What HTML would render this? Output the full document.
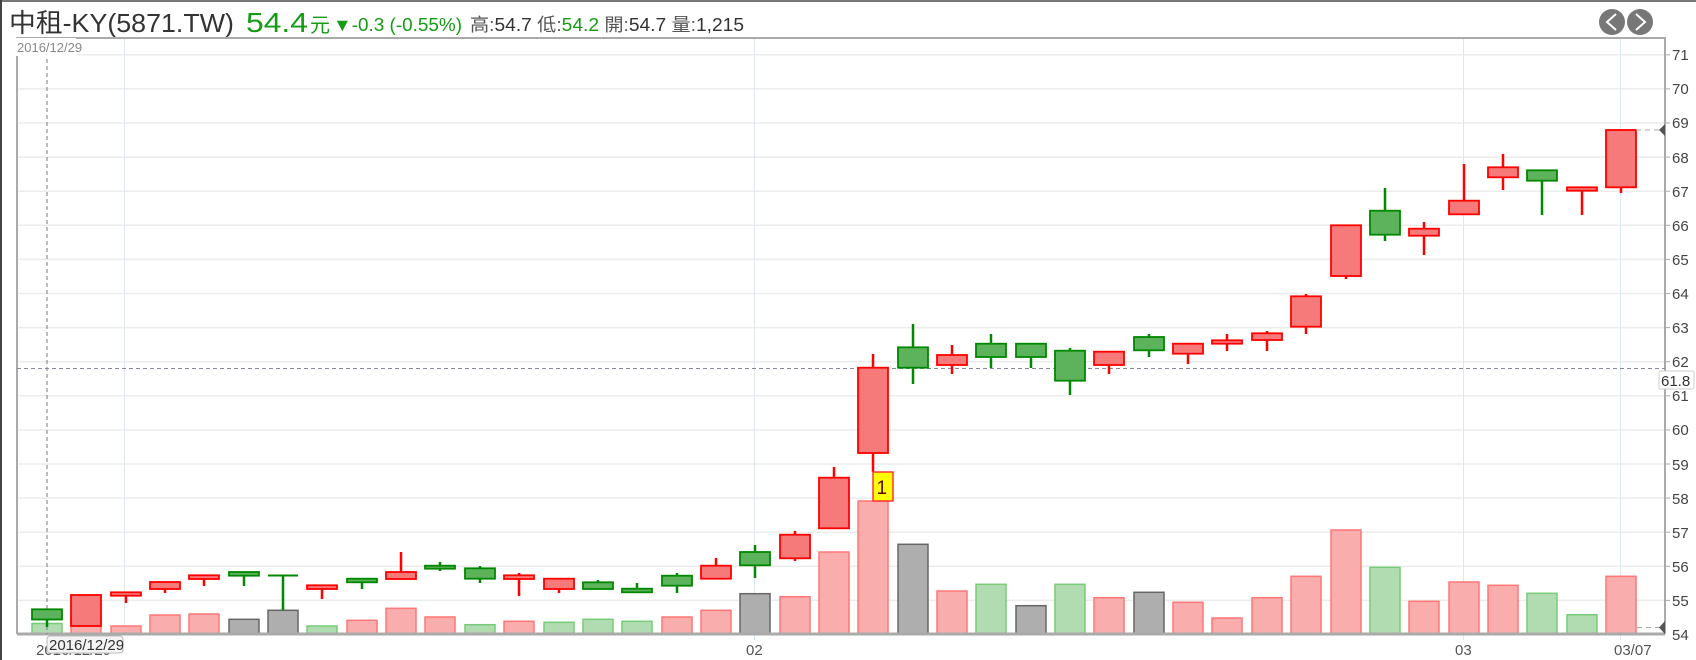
<!DOCTYPE html>
<html><head><meta charset="utf-8"><style>
html,body{margin:0;padding:0;background:#fff;width:1696px;height:660px;overflow:hidden}
svg{display:block}
text{font-family:"Liberation Sans","Noto Sans CJK TC",sans-serif}
</style></head><body>
<svg width="1696" height="660" viewBox="0 0 1696 660" xmlns="http://www.w3.org/2000/svg">
<rect width="1696" height="660" fill="#fff"/>
<line x1="0" y1="1" x2="1696" y2="1" stroke="#777" stroke-width="2"/>
<line x1="1" y1="0" x2="1" y2="660" stroke="#444" stroke-width="2"/>
<!-- header -->
<text x="9" y="32" font-size="26" fill="#333" textLength="225" lengthAdjust="spacingAndGlyphs">中租-KY(5871.TW)</text>
<text x="246" y="32" font-size="28" fill="#169b16" textLength="62" lengthAdjust="spacingAndGlyphs">54.4</text>
<text x="310" y="32" font-size="20" fill="#169b16">元</text>
<text x="333" y="31" font-size="18" fill="#169b16" textLength="129" lengthAdjust="spacingAndGlyphs">▼-0.3 (-0.55%)</text>
<text x="470" y="31" font-size="18" fill="#555" textLength="274" lengthAdjust="spacingAndGlyphs">高:<tspan fill="#333">54.7</tspan> 低:<tspan fill="#169b16">54.2</tspan> 開:<tspan fill="#333">54.7</tspan> 量:<tspan fill="#333">1,215</tspan></text>
<!-- nav buttons -->
<circle cx="1612" cy="22" r="13" fill="#777"/>
<circle cx="1640" cy="22" r="13" fill="#777"/>
<path d="M1616 14 L1607 22 L1616 30" fill="none" stroke="#fff" stroke-width="2"/>
<path d="M1636 14 L1645 22 L1636 30" fill="none" stroke="#fff" stroke-width="2"/>
<!-- grid -->
<g stroke="#ececec" stroke-width="1.5">
<line x1="17" y1="600.4" x2="1665" y2="600.4"/><line x1="17" y1="566.3" x2="1665" y2="566.3"/>
<line x1="17" y1="532.2" x2="1665" y2="532.2"/><line x1="17" y1="498.1" x2="1665" y2="498.1"/>
<line x1="17" y1="464" x2="1665" y2="464"/><line x1="17" y1="429.9" x2="1665" y2="429.9"/>
<line x1="17" y1="395.8" x2="1665" y2="395.8"/><line x1="17" y1="361.7" x2="1665" y2="361.7"/>
<line x1="17" y1="327.6" x2="1665" y2="327.6"/><line x1="17" y1="293.5" x2="1665" y2="293.5"/>
<line x1="17" y1="259.4" x2="1665" y2="259.4"/><line x1="17" y1="225.3" x2="1665" y2="225.3"/>
<line x1="17" y1="191.2" x2="1665" y2="191.2"/><line x1="17" y1="157.1" x2="1665" y2="157.1"/>
<line x1="17" y1="123" x2="1665" y2="123"/><line x1="17" y1="88.9" x2="1665" y2="88.9"/>
<line x1="17" y1="54.8" x2="1665" y2="54.8"/>
</g>
<g stroke="#d9e9f2" stroke-width="1">
<line x1="124.5" y1="38" x2="124.5" y2="634"/><line x1="754.5" y1="38" x2="754.5" y2="640"/>
<line x1="1463.5" y1="38" x2="1463.5" y2="640"/><line x1="1620.5" y1="38" x2="1620.5" y2="640"/>
</g>
<!-- plot border -->
<path d="M17 634 V38 H1665 V634" fill="none" stroke="#aaa" stroke-width="2"/>
<!-- volumes -->
<g stroke-width="1.5">
<g fill="#f9adad" stroke="#f77">
<rect x="71" y="618" width="30" height="16"/><rect x="111" y="626" width="30" height="8"/>
<rect x="150" y="615" width="30" height="19"/><rect x="189" y="614" width="30" height="20"/>
<rect x="347" y="620.3" width="30" height="13.7"/><rect x="386" y="608.3" width="30" height="25.7"/>
<rect x="425" y="617" width="30" height="17"/><rect x="504" y="621.3" width="30" height="12.7"/>
<rect x="662" y="617" width="30" height="17"/><rect x="701" y="610.3" width="30" height="23.7"/>
<rect x="780" y="596.7" width="30" height="37.3"/><rect x="819" y="552" width="30" height="82"/>
<rect x="858" y="501" width="30" height="133"/><rect x="937" y="591" width="30" height="43"/>
<rect x="1094" y="597.7" width="30" height="36.3"/><rect x="1173" y="602.3" width="30" height="31.7"/>
<rect x="1212" y="618" width="30" height="16"/><rect x="1252" y="597.7" width="30" height="36.3"/>
<rect x="1291" y="576.3" width="30" height="57.7"/><rect x="1331" y="530" width="30" height="104"/>
<rect x="1409" y="601.3" width="30" height="32.7"/><rect x="1449" y="582" width="30" height="52"/>
<rect x="1488" y="585.3" width="30" height="48.7"/><rect x="1606" y="576.3" width="30" height="57.7"/>
</g>
<g fill="#b1dbb1" stroke="#7c7">
<rect x="32" y="623.5" width="30" height="10.5"/><rect x="307" y="626" width="30" height="8"/>
<rect x="465" y="624.7" width="30" height="9.3"/><rect x="544" y="622.3" width="30" height="11.7"/>
<rect x="583" y="619.3" width="30" height="14.7"/><rect x="622" y="621.3" width="30" height="12.7"/>
<rect x="976" y="584.3" width="30" height="49.7"/><rect x="1055" y="584.3" width="30" height="49.7"/>
<rect x="1370" y="567.3" width="30" height="66.7"/><rect x="1527" y="593.3" width="30" height="40.7"/>
<rect x="1567" y="614.7" width="30" height="19.3"/>
</g>
<g fill="#aeaeae" stroke="#666">
<rect x="229" y="619.3" width="30" height="14.7"/><rect x="268" y="610.3" width="30" height="23.7"/>
<rect x="740" y="593.7" width="30" height="40.3"/><rect x="898" y="544.3" width="30" height="89.7"/>
<rect x="1016" y="605.7" width="30" height="28.3"/><rect x="1134" y="592.3" width="30" height="41.7"/>
</g>
</g>
<line x1="17" y1="634" x2="1665" y2="634" stroke="#aaa" stroke-width="3"/>
<!-- crosshair -->
<line x1="47" y1="38" x2="47" y2="634" stroke="#778" stroke-dasharray="4,3"/>
<line x1="17" y1="368.5" x2="1665" y2="368.5" stroke="#889" stroke-dasharray="4,3"/>
<!-- wicks -->
<g stroke-width="2.5">
<g stroke="#f00">
<line x1="126" y1="592" x2="126" y2="603"/><line x1="165" y1="582" x2="165" y2="593"/>
<line x1="204" y1="575" x2="204" y2="586"/><line x1="322" y1="585" x2="322" y2="599"/>
<line x1="401" y1="552" x2="401" y2="579"/><line x1="519" y1="573" x2="519" y2="596"/>
<line x1="559" y1="579" x2="559" y2="593"/><line x1="716" y1="558" x2="716" y2="579"/>
<line x1="795" y1="531" x2="795" y2="561"/><line x1="834" y1="467" x2="834" y2="528"/>
<line x1="873" y1="354" x2="873" y2="472"/><line x1="952" y1="345" x2="952" y2="374"/>
<line x1="1109" y1="352" x2="1109" y2="374"/><line x1="1188" y1="344" x2="1188" y2="364"/>
<line x1="1227" y1="334" x2="1227" y2="351"/><line x1="1267" y1="331" x2="1267" y2="351"/>
<line x1="1306" y1="294" x2="1306" y2="334"/><line x1="1346" y1="225" x2="1346" y2="279"/>
<line x1="1424" y1="222" x2="1424" y2="255"/><line x1="1464" y1="164" x2="1464" y2="214"/>
<line x1="1503" y1="154" x2="1503" y2="190"/><line x1="1582" y1="188" x2="1582" y2="215"/>
<line x1="1621" y1="130" x2="1621" y2="193"/>
</g>
<g stroke="#080">
<line x1="47" y1="609" x2="47" y2="627"/><line x1="244" y1="572" x2="244" y2="586"/>
<line x1="283" y1="575" x2="283" y2="610"/><line x1="362" y1="579" x2="362" y2="589"/>
<line x1="440" y1="562" x2="440" y2="571"/><line x1="480" y1="566" x2="480" y2="583"/>
<line x1="598" y1="580" x2="598" y2="589"/><line x1="637" y1="583" x2="637" y2="592"/>
<line x1="677" y1="573" x2="677" y2="593"/><line x1="755" y1="545" x2="755" y2="578"/>
<line x1="913" y1="324" x2="913" y2="384"/><line x1="991" y1="334" x2="991" y2="368"/>
<line x1="1031" y1="344" x2="1031" y2="368"/><line x1="1070" y1="348" x2="1070" y2="395"/>
<line x1="1149" y1="334" x2="1149" y2="357"/><line x1="1385" y1="188" x2="1385" y2="241"/>
<line x1="1542" y1="170" x2="1542" y2="215"/>
</g>
</g>
<line x1="268" y1="575.5" x2="298" y2="575.5" stroke="#080" stroke-width="2"/>
<!-- bodies -->
<g stroke-width="1.8">
<g fill="#f77a7a" stroke="#f00">
<rect x="71" y="595" width="30" height="31"/><rect x="111" y="592.3" width="30" height="3.4"/>
<rect x="150" y="582" width="30" height="7"/><rect x="189" y="575.3" width="30" height="3.7"/>
<rect x="307" y="585.3" width="30" height="3.7"/><rect x="386" y="572" width="30" height="7"/>
<rect x="504" y="575.3" width="30" height="3.7"/><rect x="544" y="578.7" width="30" height="10.3"/>
<rect x="701" y="565.7" width="30" height="13"/><rect x="780" y="534.7" width="30" height="23.6"/>
<rect x="819" y="477.7" width="30" height="50.6"/><rect x="858" y="367.7" width="30" height="85.3"/>
<rect x="937" y="355" width="30" height="10"/><rect x="1094" y="351.7" width="30" height="13.3"/>
<rect x="1173" y="343.7" width="30" height="10"/><rect x="1212" y="340.3" width="30" height="3.4"/>
<rect x="1252" y="333.3" width="30" height="6.7"/><rect x="1291" y="296.3" width="30" height="30.4"/>
<rect x="1331" y="225.3" width="30" height="50.7"/><rect x="1409" y="228.7" width="30" height="7"/>
<rect x="1449" y="200.7" width="30" height="13.6"/><rect x="1488" y="167.3" width="30" height="10"/>
<rect x="1567" y="187.3" width="30" height="3.4"/><rect x="1606" y="130" width="30" height="57.3"/>
</g>
<g fill="#5cb35c" stroke="#080">
<rect x="32" y="609.3" width="30" height="10.2"/><rect x="229" y="572" width="30" height="3.7"/>
<rect x="347" y="578.7" width="30" height="3.6"/><rect x="425" y="565.7" width="30" height="3"/>
<rect x="465" y="568.3" width="30" height="10.4"/><rect x="583" y="582.3" width="30" height="6.7"/>
<rect x="622" y="588.7" width="30" height="3.6"/><rect x="662" y="575.7" width="30" height="10"/>
<rect x="740" y="552" width="30" height="13.3"/><rect x="898" y="347.3" width="30" height="20.4"/>
<rect x="976" y="343.7" width="30" height="13.3"/><rect x="1016" y="343.7" width="30" height="13.3"/>
<rect x="1055" y="350.7" width="30" height="30"/><rect x="1134" y="337" width="30" height="13.3"/>
<rect x="1370" y="210.7" width="30" height="24"/><rect x="1527" y="170.3" width="30" height="10.4"/>
</g>
</g>
<!-- marker -->
<rect x="873" y="472" width="20" height="29" fill="#ff0" stroke="#f33" stroke-width="1.5"/>
<text x="876.5" y="494" font-size="19" fill="#600">1</text>
<!-- last price lines -->
<line x1="1636" y1="130" x2="1662" y2="130" stroke="#aaa" stroke-dasharray="5,4"/>
<path d="M1665 124 L1659 130 L1665 136Z" fill="#555"/>
<line x1="1637" y1="627.5" x2="1660" y2="627.5" stroke="#aaa" stroke-dasharray="5,4"/>
<path d="M1665 621 L1659 627.5 L1665 634Z" fill="#555"/>
<!-- y axis -->
<g stroke="#aaa"><line x1="1665" y1="600.4" x2="1670" y2="600.4"/><line x1="1665" y1="566.3" x2="1670" y2="566.3"/><line x1="1665" y1="532.2" x2="1670" y2="532.2"/><line x1="1665" y1="498.1" x2="1670" y2="498.1"/><line x1="1665" y1="464" x2="1670" y2="464"/><line x1="1665" y1="429.9" x2="1670" y2="429.9"/><line x1="1665" y1="395.8" x2="1670" y2="395.8"/><line x1="1665" y1="361.7" x2="1670" y2="361.7"/><line x1="1665" y1="327.6" x2="1670" y2="327.6"/><line x1="1665" y1="293.5" x2="1670" y2="293.5"/><line x1="1665" y1="259.4" x2="1670" y2="259.4"/><line x1="1665" y1="225.3" x2="1670" y2="225.3"/><line x1="1665" y1="191.2" x2="1670" y2="191.2"/><line x1="1665" y1="157.1" x2="1670" y2="157.1"/><line x1="1665" y1="123" x2="1670" y2="123"/><line x1="1665" y1="88.9" x2="1670" y2="88.9"/><line x1="1665" y1="54.8" x2="1670" y2="54.8"/></g>
<g font-size="15" fill="#444">
<text x="1672" y="640">54</text><text x="1672" y="606">55</text><text x="1672" y="572">56</text>
<text x="1672" y="538">57</text><text x="1672" y="504">58</text><text x="1672" y="470">59</text>
<text x="1672" y="435">60</text><text x="1672" y="401">61</text><text x="1672" y="367">62</text>
<text x="1672" y="333">63</text><text x="1672" y="299">64</text><text x="1672" y="265">65</text>
<text x="1672" y="231">66</text><text x="1672" y="197">67</text><text x="1672" y="163">68</text>
<text x="1672" y="128">69</text><text x="1672" y="94">70</text><text x="1672" y="60">71</text>
</g>
<rect x="1659" y="371" width="35" height="18" rx="2" fill="#fff" stroke="#ccc"/>
<text x="1661" y="386" font-size="15" fill="#333">61.8</text>
<!-- top-left date -->
<rect x="16" y="38" width="60" height="18" fill="#fff"/>
<text x="17" y="52" font-size="13" fill="#888">2016/12/29</text>
<!-- x labels -->
<g font-size="15" fill="#555">
<text x="36" y="655">2016/12/29</text>
<text x="746" y="655">02</text><text x="1455" y="655">03</text><text x="1614" y="655">03/07</text>
</g>
<rect x="47" y="636" width="76" height="17" rx="3" fill="#f4f4f4" stroke="#bbb"/>
<text x="49" y="650" font-size="15" fill="#333">2016/12/29</text>
<circle cx="587" cy="676" r="13" fill="none" stroke="#aaa" stroke-width="1.5"/>
<circle cx="679" cy="676" r="13" fill="none" stroke="#aaa" stroke-width="1.5"/>
</svg>
</body></html>
